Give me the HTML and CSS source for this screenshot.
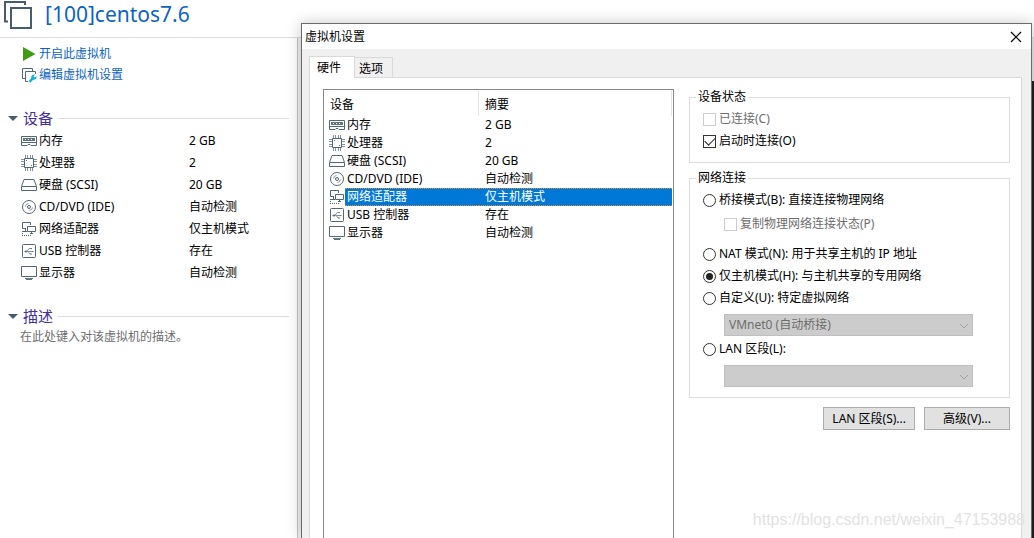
FILE: index.html
```html
<!DOCTYPE html>
<html lang="zh-CN">
<head>
<meta charset="utf-8">
<title>虚拟机设置</title>
<link rel="stylesheet" href="styles.css">
</head>
<body>
<svg class="sprite" aria-hidden="true">
  <symbol id="i-memory" viewBox="0 0 16 16">
    <path class="line" d="M.5 3.500h15v9H10l-1-1H7l-1 1H.5z"/>
    <path class="solid" d="M2 5h12v3H2z"/>
    <path class="light" d="M4 6h1v1H4zM7 6h1v1H7zM10 6h1v1h-1z"/>
    <path class="line" d="M1 9.500h14"/>
  </symbol>
  <symbol id="i-cpu" viewBox="0 0 16 16">
    <path class="line" d="M3.500 3.500h9v9h-9z"/>
    <path class="line fine" d="M4.500 0v3M6.500 0v3M9.500 0v3M11.500 0v3M4.500 13v3M6.500 13v3M9.500 13v3M11.500 13v3M0 4.500h3M0 6.500h3M0 9.500h3M0 11.500h3M13 4.500h3M13 6.500h3M13 9.500h3M13 11.500h3"/>
    <path class="solid" d="M5 5h1v1H5zM10 10h1v1h-1z"/>
  </symbol>
  <symbol id="i-disk" viewBox="0 0 16 16">
    <path class="line" d="M3 2.500h10l2.500 7v4H.5v-4zM1 9.500h14"/>
  </symbol>
  <symbol id="i-cd" viewBox="0 0 16 16">
    <circle class="line" cx="8" cy="8" r="6.500"/>
    <circle class="line" cx="8" cy="8" r="1.500"/>
    <path class="line fine" d="M4.500 7.500a3.500 3.500 0 0 1 3-3M11.500 8.500a3.500 3.500 0 0 1-3 3"/>
  </symbol>
  <symbol id="i-net" viewBox="0 0 16 16">
    <path class="line" d="M5 7.500H1.500v-6h8V4M4.500 8v2M2 10.500h4"/>
    <path class="line paper" d="M6.500 5.500h8v5h-8z"/>
    <path class="line" d="M10.500 11v2M9 12.500h3"/>
    <path class="line dots" d="M1.500 10v5M1 14.500h9"/>
  </symbol>
  <symbol id="i-usb" viewBox="0 0 16 16">
    <rect class="line" x="1.500" y="1.500" width="13" height="13" rx="1"/>
    <path class="line fine" d="M4 8.500h8M6 8.500l2-3h2M7 8.500l2 2.500h1"/>
    <path class="solid" d="M3 8.500l2.500-1.500v3zM9.500 5H11v1H9.500zM9.500 10.500H11v1H9.500zM11 8h1.500v1H11z"/>
  </symbol>
  <symbol id="i-display" viewBox="0 0 16 16">
    <path class="line" d="M.5 1.500h15v10H.5z"/>
    <path class="solid" d="M4 13h8v1H4zM5 14h6v1H5z"/>
  </symbol>
</svg>

<header class="vm-header">
  <svg class="vm-logo" viewBox="0 0 30 30" aria-hidden="true">
    <path d="M5 21.500H2V2h20v3M8 8h20v20H8z" fill="none" stroke="#485d6b" stroke-width="2"/>
  </svg>
  <h1>[100]centos7.6</h1>
</header>

<main class="workspace">
  <aside class="summary">
    <nav class="actions">
      <a href="#start"><svg viewBox="0 0 16 16" aria-hidden="true"><path d="M2 1l12.500 7L2 15z" fill="#3f9c12"/></svg>开启此虚拟机</a>
      <a href="#edit"><svg viewBox="0 0 16 16" aria-hidden="true"><path class="line" d="M4 11.500H1.500v-10h10V4M7 14.500H4.500v-10h10V7"/><path d="M8.500 15l3.500-4" stroke="#16b0d8" stroke-width="2.500" fill="none"/><path d="M10.500 11.500c-1-2.500 1-4.500 3.500-4l-1.500 2 1 1 2-1.500c.5 2.500-1.500 4.500-4 3.500z" fill="#16b0d8"/></svg>编辑虚拟机设置</a>
    </nav>
    <section>
      <h2>设备</h2>
      <table class="devices">
        <tr><td><svg><use href="#i-memory"/></svg></td><td>内存</td><td>2 GB</td></tr>
        <tr><td><svg><use href="#i-cpu"/></svg></td><td>处理器</td><td>2</td></tr>
        <tr><td><svg><use href="#i-disk"/></svg></td><td>硬盘 (SCSI)</td><td>20 GB</td></tr>
        <tr><td><svg><use href="#i-cd"/></svg></td><td>CD/DVD (IDE)</td><td>自动检测</td></tr>
        <tr><td><svg><use href="#i-net"/></svg></td><td>网络适配器</td><td>仅主机模式</td></tr>
        <tr><td><svg><use href="#i-usb"/></svg></td><td>USB 控制器</td><td>存在</td></tr>
        <tr><td><svg><use href="#i-display"/></svg></td><td>显示器</td><td>自动检测</td></tr>
      </table>
    </section>
    <section class="description">
      <h2>描述</h2>
      <p>在此处键入对该虚拟机的描述。</p>
    </section>
  </aside>
  <div class="console"></div>
</main>

<div class="dialog" role="dialog" aria-labelledby="dialog-title">
  <div class="titlebar">
    <span id="dialog-title">虚拟机设置</span>
    <button class="close" aria-label="关闭"><svg viewBox="0 0 12 12" aria-hidden="true"><path d="M1 1l10 10M11 1L1 11" stroke="#000" stroke-width="1.200"/></svg></button>
  </div>
  <div class="tabs" role="tablist">
    <button class="tab active" role="tab" aria-selected="true">硬件</button>
    <button class="tab" role="tab" aria-selected="false">选项</button>
  </div>
  <div class="pane">
    <div class="listbox">
      <table>
        <colgroup><col class="c-icon"><col class="c-name"><col></colgroup>
        <thead><tr><th colspan="2">设备</th><th>摘要</th></tr></thead>
        <tbody>
          <tr><td><svg><use href="#i-memory"/></svg></td><td>内存</td><td>2 GB</td></tr>
          <tr><td><svg><use href="#i-cpu"/></svg></td><td>处理器</td><td>2</td></tr>
          <tr><td><svg><use href="#i-disk"/></svg></td><td>硬盘 (SCSI)</td><td>20 GB</td></tr>
          <tr><td><svg><use href="#i-cd"/></svg></td><td>CD/DVD (IDE)</td><td>自动检测</td></tr>
          <tr class="selected"><td><svg><use href="#i-net"/></svg></td><td>网络适配器</td><td>仅主机模式</td></tr>
          <tr><td><svg><use href="#i-usb"/></svg></td><td>USB 控制器</td><td>存在</td></tr>
          <tr><td><svg><use href="#i-display"/></svg></td><td>显示器</td><td>自动检测</td></tr>
        </tbody>
      </table>
    </div>
    <div class="settings">
      <fieldset>
        <legend>设备状态</legend>
        <div class="group">
          <label class="off"><input type="checkbox" disabled>已连接(C)</label>
          <label><input type="checkbox" checked>启动时连接(O)</label>
        </div>
      </fieldset>
      <fieldset>
        <legend>网络连接</legend>
        <div class="group">
          <label><input type="radio" name="net">桥接模式(B): 直接连接物理网络</label>
          <label class="off nested"><input type="checkbox" disabled>复制物理网络连接状态(P)</label>
          <label><input type="radio" name="net">NAT 模式(N): 用于共享主机的 IP 地址</label>
          <label><input type="radio" name="net" checked>仅主机模式(H): 与主机共享的专用网络</label>
          <label><input type="radio" name="net">自定义(U): 特定虚拟网络</label>
          <div class="combo">
            <select disabled aria-label="自定义虚拟网络"><option>VMnet0 (自动桥接)</option></select>
            <svg viewBox="0 0 10 6" aria-hidden="true"><path d="M1 1l4 4 4-4"/></svg>
          </div>
          <label><input type="radio" name="net">LAN 区段(L):</label>
          <div class="combo">
            <select disabled aria-label="LAN 区段"><option></option></select>
            <svg viewBox="0 0 10 6" aria-hidden="true"><path d="M1 1l4 4 4-4"/></svg>
          </div>
        </div>
      </fieldset>
      <div class="buttons">
        <button>LAN 区段(S)...</button>
        <button>高级(V)...</button>
      </div>
    </div>
  </div>
</div>
<div class="watermark">https://blog.csdn.net/weixin_47153988</div>
</body>
</html>
```
FILE: styles.css
```css
* { box-sizing: border-box; }
body {
  margin: 0;
  height: 100vh;
  overflow: hidden;
  position: relative;
  display: flex;
  flex-direction: column;
  background: #fff;
  color: #000;
  font: 12px/16px "Noto Sans", "Noto Sans CJK SC", sans-serif;
}
button, select, input { font: inherit; color: inherit; margin: 0; }
svg { display: block; flex: none; width: 16px; height: 16px; }
.sprite { display: none; }
.line { fill: none; stroke: #526673; }
.fine { stroke: #8592a0; }
.solid { fill: #607380; }
.light, .paper { fill: #fff; }
.dots { stroke-dasharray: 1 1; }

.vm-header {
  height: 38px;
  padding-left: 3px;
  display: flex;
  gap: 12px;
  border-bottom: 1px solid #dcdcdc;
}
.vm-logo { width: 30px; height: 30px; }
.vm-header h1 {
  margin: 0;
  color: #0b63c5;
  font-size: 21px;
  line-height: 28px;
  font-weight: 400;
}

.workspace { flex: 1; display: flex; min-height: 0; }
.summary { width: 298px; padding: 5px 8px 0 8px; border-right: 1px solid #c3c3c3; }
.actions { display: flex; flex-direction: column; padding-left: 13px; margin-bottom: 23px; }
.actions a {
  display: flex;
  align-items: center;
  gap: 2px;
  height: 21px;
  color: #0b63c5;
  text-decoration: none;
}
.summary h2 {
  margin: 0;
  display: flex;
  align-items: center;
  gap: 5px;
  height: 20px;
  color: #43309b;
  font-size: 15px;
  font-weight: 400;
}
.summary h2::before {
  content: "";
  border: 5px solid transparent;
  border-top-color: #485d6b;
  border-bottom: 0;
}
.summary h2::after { content: ""; flex: 1; height: 1px; background: #dcdcdc; }
.devices { border-collapse: collapse; margin: 2px 0 0 13px; }
.devices td { height: 22px; padding: 0; }
.devices td:first-child { width: 18px; }
.devices td:nth-child(2) { width: 150px; }
.description { margin-top: 22px; }
.description p { margin: 3px 0 0 12px; color: #6d6d6d; }
.console {
  flex: 1;
  background: linear-gradient(#e8e8e8 43px, #202020 43px);
  border-left: 4px solid #f0f0f0;
}

.dialog {
  position: absolute;
  left: 301px;
  right: 2px;
  top: 23px;
  bottom: 0;
  display: flex;
  flex-direction: column;
  background: #f0f0f0;
  border: 1px solid #6b6b6b;
  border-bottom: 0;
  box-shadow: 0 0 14px rgba(0, 0, 0, .22);
}
.titlebar {
  display: flex;
  align-items: center;
  justify-content: space-between;
  height: 25px;
  padding: 0 9px 0 3px;
  background: #fff;
}
.close { padding: 0; border: 0; background: none; }
.close svg { width: 12px; height: 12px; }
.tabs { display: flex; align-items: flex-end; height: 28px; padding-left: 7px; }
.tab {
  height: 20px;
  padding: 2px 9px 0 4px;
  border: 1px solid #d9d9d9;
  border-width: 1px 1px 0 0;
  background: #f0f0f0;
}
.tab.active {
  position: relative;
  z-index: 1;
  height: 22px;
  margin-bottom: -1px;
  padding: 0 13px 0 7px;
  border-left-width: 1px;
  background: #fff;
}
.pane {
  flex: 1;
  min-height: 0;
  display: flex;
  gap: 15px;
  margin: 0 9px 0 7px;
  padding: 11px 11px 0 13px;
  background: #fff;
  border: 1px solid #d9d9d9;
  border-bottom: 0;
}
.listbox {
  flex: 0 1 351px;
  padding-right: 1px;
  border: 1px solid #828790;
  border-bottom: 0;
}
.listbox table { width: 100%; table-layout: fixed; border-collapse: separate; border-spacing: 0; }
.c-icon { width: 21px; }
.c-name { width: 134px; }
.listbox th {
  height: 26px;
  padding: 3px 6px 0;
  border-right: 1px solid #e5e5e5;
  font-weight: 400;
  text-align: left;
}
.listbox td {
  height: 18px;
  padding: 0 2px;
  border: 1px dotted transparent;
  border-width: 1px 0;
}
.listbox td:first-child { padding: 0 0 0 5px; }
.listbox td:nth-child(3) { padding-left: 6px; }
.selected td:not(:first-child) { background: #0078d7; color: #fff; border-color: #e08a38; }

.settings { flex: 1; min-width: 0; padding-top: 1px; }
fieldset { min-width: 0; margin: 0 0 8px; padding: 0; border: 1px solid #dcdcdc; }
legend { margin-left: 6px; padding: 0 2px; line-height: 14px; }
.group { display: flex; flex-direction: column; padding: 4px 36px 10px 13px; }
.group label { display: flex; align-items: center; gap: 3px; height: 22px; }
.group .off { color: #6d6d6d; }
.group .nested { margin: 2px 0 8px 21px; }
input {
  appearance: none;
  display: grid;
  place-items: center;
  flex: none;
  width: 13px;
  height: 13px;
  border: 1px solid #333;
  background: #fff;
}
input:disabled { border-color: #ccc; }
input[type="radio"] { border-radius: 50%; }
input[type="radio"]:checked::before {
  content: "";
  width: 7px;
  height: 7px;
  border-radius: 50%;
  background: #222;
}
input[type="checkbox"]:checked::before {
  content: "";
  width: 9px;
  height: 5px;
  margin-bottom: 3px;
  border: solid #222;
  border-width: 0 0 1px 1px;
  transform: rotate(-45deg);
}
.combo { position: relative; margin: 5px 0 2px 21px; }
.combo:last-child { margin-bottom: 0; }
.combo select {
  display: block;
  width: 100%;
  height: 22px;
  padding: 0 4px;
  appearance: none;
  border: 1px solid #bfbfbf;
  border-radius: 0;
  background: #ccc;
  color: #6d6d6d;
  opacity: 1;
}
.combo svg {
  position: absolute;
  right: 4px;
  top: 9px;
  width: 10px;
  height: 6px;
  fill: none;
  stroke: #a0a0a0;
}
.buttons { display: flex; justify-content: flex-end; gap: 9px; padding-top: 1px; }
.buttons button {
  height: 23px;
  min-width: 86px;
  padding: 0 8px;
  border: 1px solid #adadad;
  background: #e1e1e1;
}
.watermark {
  position: absolute;
  right: 9px;
  bottom: 8px;
  color: #e2e2e2;
  font: 16px/20px "Liberation Sans", sans-serif;
}
```
